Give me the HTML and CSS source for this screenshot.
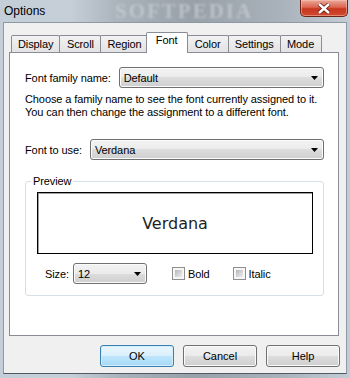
FILE: index.html
```html
<!DOCTYPE html>
<html lang="en">
<head>
  <meta charset="UTF-8" />
  <title>Options</title>
  <link rel="stylesheet" href="styles.css">
</head>
<body>
  <div class="window">
    <div class="titlebar">
      <span class="title">Options</span>
      <span class="glass-mark">SOFTPEDIA</span>
      <div class="close">
        <svg width="16" height="11" viewBox="0 0 16 11">
          <path d="M3 1 L13 10 M13 1 L3 10" stroke="#5a1a10" stroke-width="4" fill="none"/>
          <path d="M3 1 L13 10 M13 1 L3 10" stroke="#fff" stroke-width="2.4" fill="none"/>
        </svg>
      </div>
    </div>

    <div class="client">
      <div class="tabs">
        <div class="tabstrip">
          <span class="tab">Display</span>
          <span class="tab">Scroll</span>
          <span class="tab">Region</span>
          <span class="tab active">Font</span>
          <span class="tab">Color</span>
          <span class="tab">Settings</span>
          <span class="tab">Mode</span>
        </div>

        <div class="panel">
          <div class="row">
            <span class="label">Font family name:</span>
            <div class="combo">
              <span>Default</span>
              <svg class="arrow" width="7" height="4" viewBox="0 0 7 4"><path d="M0 0 H7 L3.5 4 Z" fill="#000"/></svg>
            </div>
          </div>

          <p class="hint">Choose a family name to see the font currently assigned to it.<br>You can then change the assignment to a different font.</p>

          <div class="row">
            <span class="label">Font to use:</span>
            <div class="combo">
              <span>Verdana</span>
              <svg class="arrow" width="7" height="4" viewBox="0 0 7 4"><path d="M0 0 H7 L3.5 4 Z" fill="#000"/></svg>
            </div>
          </div>

          <fieldset class="group">
            <legend>Preview</legend>
            <div class="preview">Verdana</div>
            <div class="size-row">
              <span class="label">Size:</span>
              <div class="combo small">
                <span>12</span>
                <svg class="arrow" width="7" height="4" viewBox="0 0 7 4"><path d="M0 0 H7 L3.5 4 Z" fill="#000"/></svg>
              </div>
              <label class="checkbox"><span class="box"></span>Bold</label>
              <label class="checkbox"><span class="box"></span>Italic</label>
            </div>
          </fieldset>
        </div>
      </div>

      <div class="buttons">
        <button class="btn default">OK</button>
        <button class="btn">Cancel</button>
        <button class="btn">Help</button>
      </div>
    </div>
  </div>
</body>
</html>
```

FILE: styles.css
```css
html, body {
  margin: 0;
  width: 350px;
  height: 378px;
  overflow: hidden;
}
body {
  font-family: 'Liberation Sans', Arial, sans-serif;
  font-size: 11px;
  letter-spacing: -0.1px;
  color: #000;
}
.window {
  box-sizing: border-box;
  width: 350px;
  height: 378px;
  display: flex;
  flex-direction: column;
  padding: 0 3px 4px 3px;
  background: linear-gradient(90deg, #c3ced8 0%, #c6cfd7 20%, #aab3bb 34%, #98a0a8 55%, #a9b2ba 80%, #c4cdd5 100%);
}
.titlebar {
  height: 22px;
  display: flex;
  justify-content: space-between;
  align-items: flex-start;
  position: relative;
}
.title {
  font-size: 12px;
  letter-spacing: 0;
  padding: 4px 0 0 1px;
  color: #000;
  position: relative;
  z-index: 1;
}
.glass-mark {
  position: absolute;
  left: 112px;
  top: 0;
  line-height: 22px;
  font-family: 'Liberation Serif', serif;
  font-weight: bold;
  font-size: 21px;
  letter-spacing: 2px;
  color: rgba(212, 217, 222, 0.55);
  filter: blur(1.2px);
}
.close {
  width: 48px;
  height: 17px;
  margin-right: -1px;
  box-sizing: border-box;
  border: 1px solid #6b2418;
  border-top: none;
  border-radius: 0 0 5px 5px;
  background: linear-gradient(#eaa999 0%, #dc6550 45%, #c8361f 55%, #cf4a30 100%);
  box-shadow: inset 0 0 0 1px rgba(255, 200, 190, 0.5);
  display: flex;
  align-items: center;
  justify-content: center;
  position: relative;
  z-index: 1;
}
.client {
  flex: 1;
  display: flex;
  flex-direction: column;
  background: #f0f0f0;
  border: 1px solid #8d99a4;
  border-bottom-color: #4e5a66;
}
.tabs {
  flex: 1;
  display: flex;
  flex-direction: column;
  margin: 9px 7px 0 5px;
}
.tabstrip {
  display: flex;
  align-items: flex-end;
  height: 20px;
  padding-left: 2px;
}
.tab {
  box-sizing: border-box;
  min-width: 42px;
  height: 17px;
  padding: 2px 6px 0 6px;
  margin-right: -1px;
  text-align: center;
  border: 1px solid #898c95;
  border-bottom: none;
  border-radius: 2px 2px 0 0;
  background: linear-gradient(#f2f2f2, #e3e3e3);
}
.tab.active {
  height: 21px;
  margin: 0 -1px -1px -2px;
  padding: 1px 8px 0 8px;
  background: #fff;
  position: relative;
  z-index: 1;
}
.panel {
  flex: 1;
  border: 1px solid #898c95;
  background: #fff;
  padding: 14px 14px 0 15px;
}
.row {
  display: flex;
  align-items: center;
  gap: 8px;
}
.combo {
  flex: 1;
  box-sizing: border-box;
  height: 21px;
  display: flex;
  align-items: center;
  justify-content: space-between;
  padding: 0 5px 0 4px;
  border: 1px solid #707070;
  border-radius: 3px;
  background: linear-gradient(#f2f2f2 0%, #ebebeb 50%, #dddddd 50%, #cfcfcf 100%);
  box-shadow: inset 0 0 0 1px #fbfbfb;
}
.combo.small {
  flex: none;
  width: 74px;
}
.hint {
  margin: 5px 0 20px 0;
  line-height: 13px;
}
.group {
  margin: 15px 0 0 0;
  padding: 5px 10px 11px 11px;
  border: 1px solid #d5dfe5;
  border-radius: 3px;
}
.group legend {
  padding: 0 2px;
  margin-left: -6px;
}
.preview {
  box-sizing: border-box;
  height: 62px;
  border: 1px solid #000;
  box-shadow: inset 1px 1px 0 #a0a0a0;
  display: flex;
  align-items: center;
  justify-content: center;
  font-family: 'DejaVu Sans', Verdana, sans-serif;
  font-size: 16px;
  letter-spacing: 0;
  color: #1e1e1e;
}
.size-row {
  display: flex;
  align-items: center;
  margin-top: 9px;
  padding-left: 8px;
}
.size-row .label {
  margin-right: 4px;
}
.checkbox {
  display: flex;
  align-items: center;
  gap: 3px;
  margin-left: 25px;
}
.checkbox + .checkbox {
  margin-left: 23px;
}
.box {
  box-sizing: border-box;
  width: 13px;
  height: 13px;
  padding: 2px;
  border: 1px solid #8e8f8f;
  background: linear-gradient(135deg, #b2b6bc, #eeeeee) content-box, #f6f6f6;
}
.buttons {
  display: flex;
  justify-content: flex-end;
  gap: 9px;
  margin: 9px 6px 6px 0;
}
.btn {
  box-sizing: border-box;
  width: 74px;
  height: 22px;
  font-family: 'Liberation Sans', Arial, sans-serif;
  font-size: 11px;
  color: #000;
  border: 1px solid #707070;
  border-radius: 3px;
  background: linear-gradient(#f2f2f2 0%, #ebebeb 50%, #dddddd 50%, #cfcfcf 100%);
  box-shadow: inset 0 0 0 1px #fbfbfb;
  padding: 0;
}
.btn.default {
  border-color: #3c7fb1;
  background: linear-gradient(#eaf6fd 0%, #d9f0fc 50%, #bee6fd 50%, #a7d9f5 100%);
  box-shadow: inset 0 0 0 1px #cfeefc;
}
```
